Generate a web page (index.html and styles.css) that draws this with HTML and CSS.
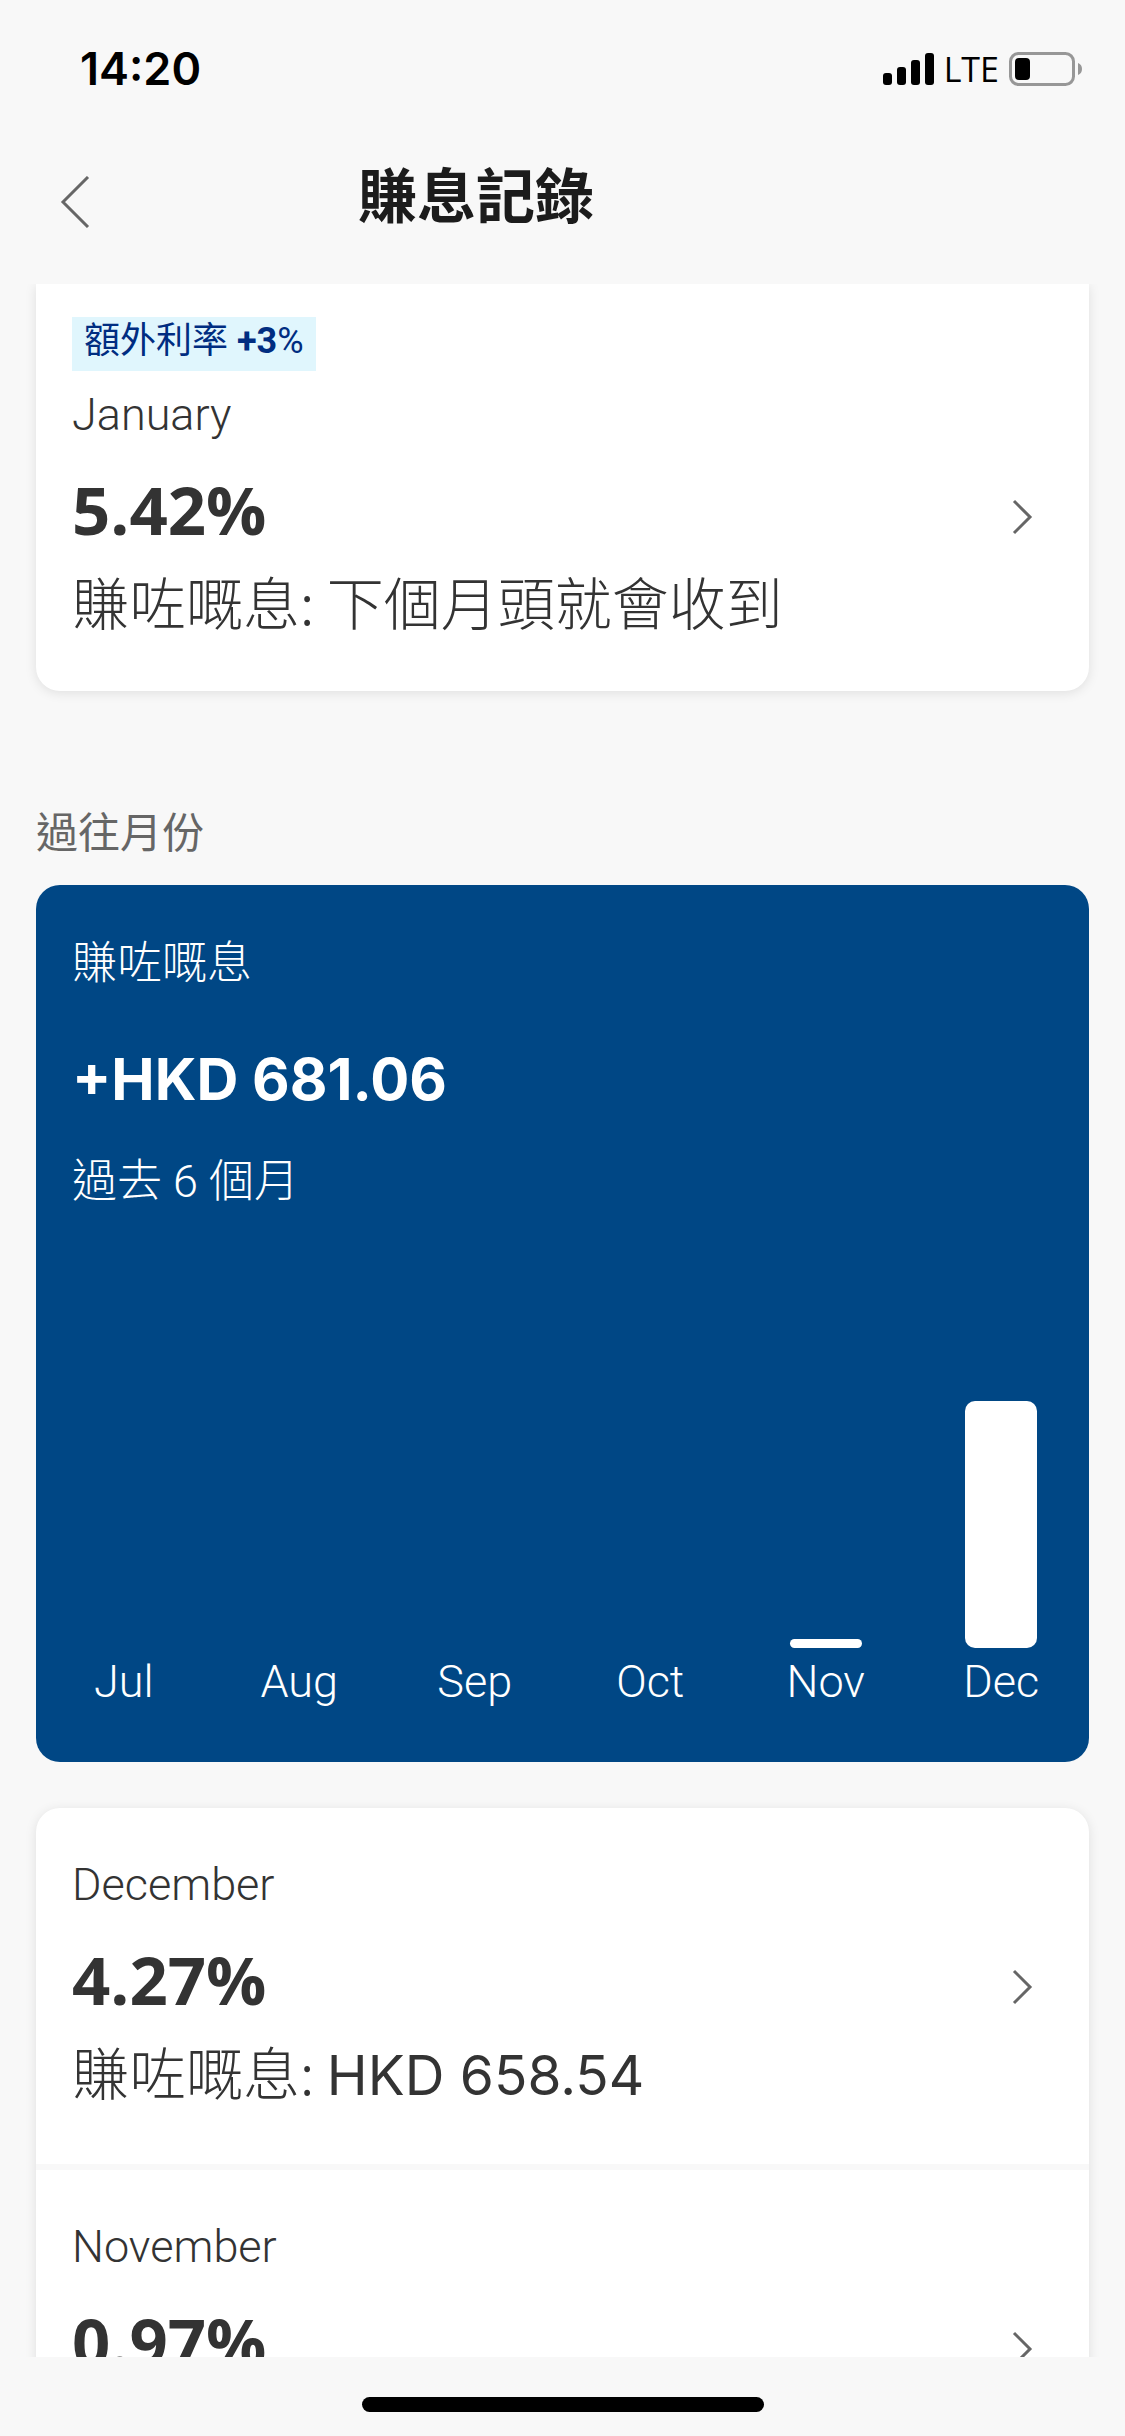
FILE: index.html
```html
<!DOCTYPE html>
<html lang="zh-HK">
<head>
<meta charset="utf-8">
<meta name="viewport" content="width=device-width, initial-scale=1">
<title>賺息記錄</title>
<link rel="stylesheet" href="styles.css">
</head>
<body>
<div class="status">
  <span class="time">14:20</span>
  <div class="status-right">
    <svg class="signal" width="51" height="33" viewBox="0 0 51 33" aria-hidden="true">
      <rect x="0" y="20" width="9" height="12" rx="3"/>
      <rect x="14" y="14" width="9" height="18" rx="3"/>
      <rect x="28" y="7" width="9" height="25" rx="3"/>
      <rect x="42" y="0" width="9" height="32" rx="3"/>
    </svg>
    <span class="network">LTE</span>
    <svg class="battery" width="74" height="34" viewBox="0 0 74 34" aria-hidden="true">
      <rect x="1.5" y="1.5" width="63" height="31" rx="8" fill="none" stroke="#979797" stroke-width="3"/>
      <rect x="6" y="6" width="15" height="22" rx="4"/>
      <path d="M69 11a6.500 6.500 0 0 1 0 12z" fill="#979797"/>
    </svg>
  </div>
</div>
<header class="nav">
  <button class="back" type="button" aria-label="返回">
    <svg width="30" height="52" viewBox="0 0 30 52"><path d="M28 1 3 26 28 51"/></svg>
  </button>
  <h1 class="title">賺息記錄</h1>
</header>
<main class="content">
  <section class="card current">
    <span class="tag">額外利率 <b>+3</b>%</span>
    <a class="row row-current" href="#january">
      <span class="row-text">
        <span class="month">January</span>
        <span class="rate">5.42%</span>
        <span class="note">賺咗嘅息: 下個月頭就會收到</span>
      </span>
      <svg class="chevron" width="21" height="36" viewBox="0 0 21 36"><path d="M2 2 18 18 2 34"/></svg>
    </a>
  </section>
  <h2 class="section-title">過往月份</h2>
  <section class="summary">
    <p class="summary-label">賺咗嘅息</p>
    <p class="total">+HKD 681.06</p>
    <p class="summary-label">過去 6 個月</p>
    <ul class="chart">
      <li class="col">Jul</li>
      <li class="col">Aug</li>
      <li class="col">Sep</li>
      <li class="col">Oct</li>
      <li class="col"><span class="bar" style="height: 9px"></span>Nov</li>
      <li class="col"><span class="bar" style="height: 247px"></span>Dec</li>
    </ul>
  </section>
  <section class="card history">
    <a class="row" href="#december">
      <span class="row-text">
        <span class="month">December</span>
        <span class="rate">4.27%</span>
        <span class="note">賺咗嘅息: <span class="amount">HKD 658.54</span></span>
      </span>
      <svg class="chevron" width="21" height="36" viewBox="0 0 21 36"><path d="M2 2 18 18 2 34"/></svg>
    </a>
    <a class="row" href="#november">
      <span class="row-text">
        <span class="month">November</span>
        <span class="rate">0.97%</span>
      </span>
      <svg class="chevron" width="21" height="36" viewBox="0 0 21 36"><path d="M2 2 18 18 2 34"/></svg>
    </a>
  </section>
</main>
<footer class="home"><span class="home-bar"></span></footer>
</body>
</html>
```
FILE: styles.css
```css
* { box-sizing: border-box; }

body {
  margin: 0;
  height: 100vh;
  display: flex;
  flex-direction: column;
  background: #f8f8f8;
  color: #333;
  font-family: "Open Sans", "Noto Sans CJK TC", sans-serif;
  font-weight: 300;
}

h1, h2, p, ul { margin: 0; padding: 0; }
ul { list-style: none; }
svg { display: block; }

/* Status bar */
.status {
  flex: none;
  display: flex;
  justify-content: space-between;
  align-items: center;
  height: 138px;
  padding: 0 42px 0 80px;
  color: #000;
}
.time {
  font: 600 45px/60px Inter, sans-serif;
}
.status-right { display: flex; align-items: center; gap: 10px; }
.network { font-size: 34px; line-height: 48px; font-weight: 500; }

/* Navigation */
.nav {
  flex: none;
  display: flex;
  height: 146px;
  padding: 14px 60px 0;
}
.back {
  width: 298px;
  height: 100px;
  padding: 0;
  border: 0;
  background: none;
}
.back path, .chevron path { fill: none; stroke: #666; stroke-width: 3; }
.title {
  font-size: 59px;
  line-height: 86px;
  font-weight: 700;
  color: #1c1c1c;
}

.content {
  flex: 1;
  min-height: 0;
  padding: 0 36px;
  overflow-y: auto;
  scrollbar-width: none;
}

/* Cards */
.card {
  background: #fff;
  border-radius: 24px;
  box-shadow: 0 2px 12px rgba(0, 0, 0, .1);
}
.current {
  padding: 33px 0 29px;
  border-top-left-radius: 0;
  border-top-right-radius: 0;
}
.tag {
  display: block;
  width: fit-content;
  margin-left: 36px;
  padding: 0 12px 6px;
  background: #e0f6fd;
  color: #002d81;
  font-family: Roboto, "Noto Sans CJK TC", sans-serif;
  font-size: 36px;
  line-height: 48px;
  font-weight: 400;
}
.tag b { font-weight: 700; }
.row {
  display: flex;
  justify-content: space-between;
  align-items: flex-start;
  padding: 38px 56px 58px 36px;
  color: inherit;
  text-decoration: none;
}
.row + .row { border-top: 6px solid #f8f8f8; }
.row-current { padding-top: 5px; padding-bottom: 26px; }
.row-text > span { display: block; }
.chevron { margin-top: 123px; }
.month {
  font-family: Roboto, sans-serif;
  font-size: 45px;
  line-height: 78px;
}
.rate { font-size: 67px; line-height: 110px; font-weight: 700; }
.note {
  font-family: "Noto Sans CJK TC", sans-serif;
  font-size: 57px;
  line-height: 72px;
}
.amount {
  font-family: Inter, sans-serif;
  font-size: 55px;
  line-height: 1;
  font-weight: 400;
}

.section-title {
  padding: 110px 0 22px;
  color: #666;
  font-size: 42px;
  line-height: 62px;
  font-weight: 400;
}

/* Six-month summary */
.summary {
  padding: 45px 0 46px;
  border-radius: 24px;
  background: #004785;
  color: #fff;
  font-family: Roboto, "Noto Sans CJK TC", sans-serif;
}
.summary p { padding: 0 36px; }
.summary-label { font-size: 45px; line-height: 68px; }
.total {
  margin-top: 12px;
  font-family: Inter, sans-serif;
  font-size: 58px;
  line-height: 138px;
  font-weight: 700;
}
.chart {
  display: grid;
  grid-template-columns: repeat(6, 1fr);
  height: 500px;
}
.col {
  display: flex;
  flex-direction: column;
  justify-content: flex-end;
  align-items: center;
  font-size: 45px;
  line-height: 68px;
}
.bar { width: 72px; border-radius: 10px; background: #fff; }

.history { margin-top: 46px; }

/* Home indicator */
.home {
  flex: none;
  display: flex;
  justify-content: center;
  height: 79px;
  padding-top: 40px;
}
.home-bar { width: 402px; height: 15px; border-radius: 8px; background: #000; }
```
